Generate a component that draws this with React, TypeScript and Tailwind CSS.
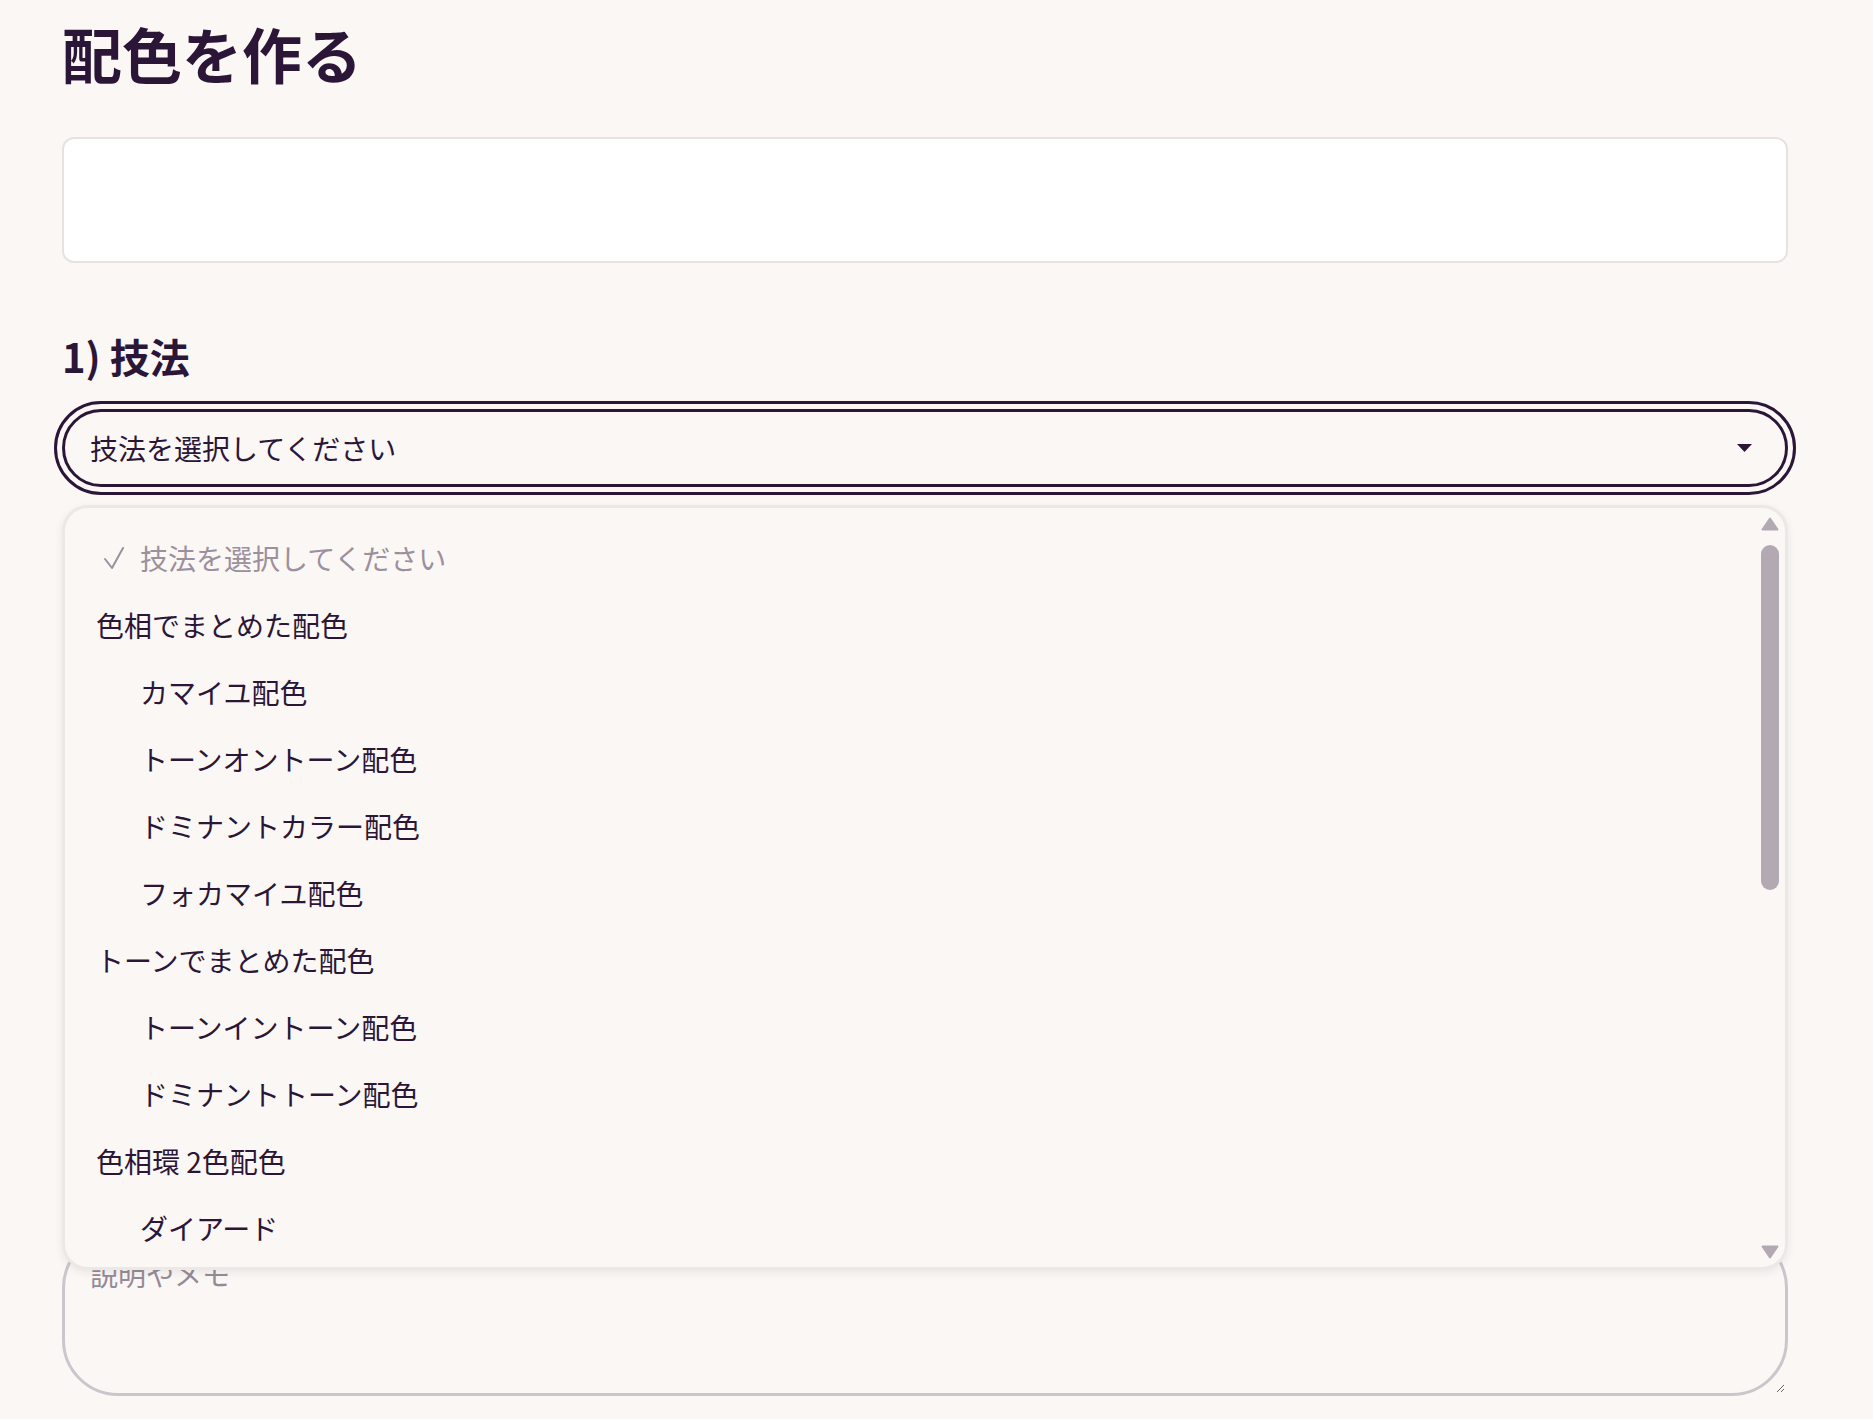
import React from "react";

type Row = { label: string; kind: "placeholder" | "group" | "option" };

const rows: Row[] = [
  { label: "技法を選択してください", kind: "placeholder" },
  { label: "色相でまとめた配色", kind: "group" },
  { label: "カマイユ配色", kind: "option" },
  { label: "トーンオントーン配色", kind: "option" },
  { label: "ドミナントカラー配色", kind: "option" },
  { label: "フォカマイユ配色", kind: "option" },
  { label: "トーンでまとめた配色", kind: "group" },
  { label: "トーンイントーン配色", kind: "option" },
  { label: "ドミナントトーン配色", kind: "option" },
  { label: "色相環 2色配色", kind: "group" },
  { label: "ダイアード", kind: "option" },
];

function Check() {
  return (
    <svg width="22" height="24" viewBox="0 0 22 24" fill="none" aria-hidden="true">
      <polyline
        points="2,13 9,22 20,2"
        stroke="#9b909c"
        strokeWidth="2"
        strokeLinecap="round"
        strokeLinejoin="round"
      />
    </svg>
  );
}

function Arrow({ up }: { up?: boolean }) {
  return (
    <svg width="18" height="14" viewBox="0 0 18 14" aria-hidden="true">
      <path
        d={up ? "M9 1.5 L16.5 12.5 L1.5 12.5 Z" : "M1.5 1.5 L16.5 1.5 L9 12.5 Z"}
        fill="#b2a9b3"
        stroke="#b2a9b3"
        strokeWidth="2"
        strokeLinejoin="round"
      />
    </svg>
  );
}

function OptionRow({ row }: { row: Row }) {
  if (row.kind === "group") {
    return (
      <div className="flex h-[67px] items-center pl-[31px] text-[#2b1637]">{row.label}</div>
    );
  }
  const muted = row.kind === "placeholder";
  return (
    <div className={`flex h-[67px] items-center pl-[38px] ${muted ? "text-[#9b909c]" : "text-[#2b1637]"}`}>
      <span className="flex w-[37px] shrink-0 items-center">{muted && <Check />}</span>
      <span>{row.label}</span>
    </div>
  );
}

export default function App() {
  return (
    <div className="min-h-screen bg-[#faf7f5] font-['Noto_Sans_CJK_JP','Noto_Sans',sans-serif] text-[#2b1637]">
      <main className="ml-[62px] w-[1726px] pt-[17px]">
        <h1 className="text-[60px] font-bold leading-[72px]">配色を作る</h1>

        <div className="mt-[48px] h-[126px] rounded-[12px] border-2 border-[#e7e2df] bg-white" />

        <h2 className="mt-[70px] text-[40px] font-bold leading-[46px]">1) 技法</h2>

        <div className="relative mt-[30px]">
          <button
            type="button"
            className="flex h-[78px] w-full items-center justify-between rounded-full border-[3px] border-[#2b1637] pl-[25px] pr-[33px] text-[28px] leading-none outline-[3px] outline-offset-[5px] outline-[#2b1637] outline-solid"
          >
            <span>技法を選択してください</span>
            <svg width="15" height="8" viewBox="0 0 15 8" aria-hidden="true">
              <path d="M0 0 L15 0 L7.5 8 Z" fill="#2b1637" />
            </svg>
          </button>

          <div className="absolute left-0 right-0 top-[calc(100%+18px)] z-10 flex h-[765px] overflow-hidden rounded-[26px] border-[3px] border-[#ece8e5] bg-[#faf7f5] shadow-[0_3px_8px_rgba(60,40,50,0.08)]">
            <div className="flex-1 pt-[16px] text-[28px]">
              {rows.map((row) => (
                <OptionRow key={row.label} row={row} />
              ))}
            </div>
            <div className="mr-[6px] flex w-[18px] flex-col items-center pb-[8px] pt-[9px]">
              <Arrow up />
              <div className="mt-[14px] h-[345px] w-[18px] rounded-full bg-[#b2a9b3]" />
              <div className="flex-1" />
              <Arrow />
            </div>
          </div>
        </div>

        <textarea
          placeholder="説明やメモ"
          className="mt-[745px] block h-[164px] w-full rounded-[56px] border-[3px] border-[#ccc6cc] bg-transparent pl-[25px] pt-[18px] text-[28px] leading-[1.5] placeholder:text-[#958b96] focus:outline-none"
        />
      </main>
    </div>
  );
}
